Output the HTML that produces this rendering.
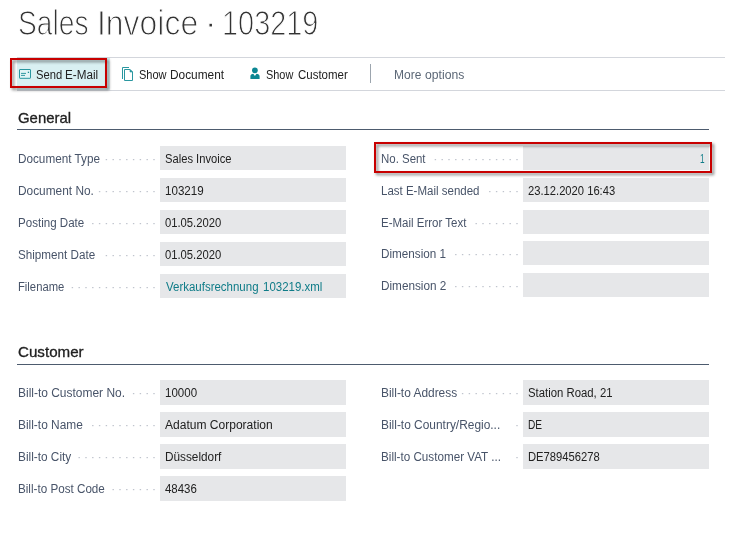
<!DOCTYPE html>
<html><head><meta charset="utf-8">
<style>
html,body{margin:0;padding:0;background:#fff;}
body{width:732px;height:535px;position:relative;overflow:hidden;font-family:"Liberation Sans",sans-serif;color:#212121;}
.abs{position:absolute;}
#title{left:0px;top:1px;font-size:34.5px;line-height:44px;color:#333;white-space:nowrap;-webkit-text-stroke:1.1px #fff;}
.tw{position:absolute;top:0;transform-origin:0 0;}
.t{position:absolute;white-space:nowrap;line-height:1;transform-origin:0 0;}
.line{left:17px;width:708px;height:1px;background:#d3d6dc;}
#btn{left:17px;top:58px;width:93px;height:32px;background:#d9f0f2;}
.red{border:2px solid #c80000;filter:drop-shadow(2.5px 2.5px 1.8px rgba(0,0,0,.5));}
.sep{left:370px;top:64px;width:1px;height:19px;background:#9ca5ae;}
.hr{left:17px;width:692px;height:1px;background:#4d5b6e;}
.f{width:186px;background:#e6e7e9;}
.dots{height:1px;background-image:linear-gradient(90deg,#c3c7d0 0,#c3c7d0 1.5px,transparent 1.5px);background-size:6.9px 1px;background-position:right center;background-repeat:repeat-x;}
</style></head><body>
<div id="title" class="abs"><span class="tw" style="left:18.37px;transform:scaleX(0.8169)" id="t1">Sales</span><span class="tw" style="left:96.8px;transform:scaleX(0.9252)" id="t2">Invoice</span><span class="tw" style="left:204.03px;transform:scaleX(1.1667)" id="t3">·</span><span class="tw" style="left:221.79px;transform:scaleX(0.8373)" id="t4">103219</span></div>
<div class="abs line" style="top:57px"></div>
<div class="abs line" style="top:90px"></div>
<div id="btn" class="abs"></div>
<svg class="abs" style="left:19px;top:69px" width="12" height="10" viewBox="0 0 12 10"><rect x="0.5" y="0.5" width="11" height="8.800" rx="0.4" fill="#e2f4f6" stroke="#2a97a0"/><path d="M2 4.400h5M2 6.400h4" fill="none" stroke="#1f8f99" stroke-width="0.9"/><rect x="8.800" y="2.700" width="1.300" height="1.300" fill="#1f8f99"/></svg>
<svg class="abs" style="left:121px;top:66px" width="13" height="16" viewBox="0 0 13 16"><path d="M1.500 13V1.500H8" fill="none" stroke="#2a97a0"/><path d="M3.500 3.500H9L11.500 6V14.500H3.500Z" fill="#fff" stroke="#2a97a0"/><path d="M9 3.500V6H11.500Z" fill="#2a97a0" stroke="#2a97a0" stroke-width="0.6"/></svg>
<svg class="abs" style="left:250px;top:67px" width="10" height="13" viewBox="0 0 10 13"><circle cx="4.900" cy="3.300" r="2.850" fill="#0b8793"/><path d="M0.400 12V9.300C0.400 7.600 1.600 6.700 3.300 6.700L4.900 8.900L6.500 6.700C8.300 6.700 9.600 7.600 9.600 9.300V12Z" fill="#0b8793"/></svg>
<div class="abs sep"></div>
<div class="abs hr" style="top:129px"></div>
<div class="abs hr" style="top:364px"></div>
<div class="abs f" style="left:160px;top:146px;height:24px"></div>
<div class="abs f" style="left:160px;top:178px;height:24px"></div>
<div class="abs f" style="left:160px;top:210px;height:24px"></div>
<div class="abs f" style="left:160px;top:242px;height:24px"></div>
<div class="abs f" style="left:160px;top:274px;height:24px"></div>
<div class="abs f" style="left:160px;top:380px;height:25px"></div>
<div class="abs f" style="left:160px;top:412px;height:25px"></div>
<div class="abs f" style="left:160px;top:444px;height:25px"></div>
<div class="abs f" style="left:160px;top:476px;height:25px"></div>
<div class="abs f" style="left:523px;top:146px;height:24px"></div>
<div class="abs f" style="left:523px;top:178px;height:24px"></div>
<div class="abs f" style="left:523px;top:210px;height:24px"></div>
<div class="abs f" style="left:523px;top:241px;height:24px"></div>
<div class="abs f" style="left:523px;top:273px;height:24px"></div>
<div class="abs f" style="left:523px;top:380px;height:25px"></div>
<div class="abs f" style="left:523px;top:412px;height:25px"></div>
<div class="abs f" style="left:523px;top:444px;height:25px"></div>
<svg class="abs" style="left:0;top:0" width="732" height="535" fill="#bfc4cd"><rect x="153.30" y="159" width="1.4" height="1.2"/><rect x="146.50" y="159" width="1.4" height="1.2"/><rect x="139.70" y="159" width="1.4" height="1.2"/><rect x="132.90" y="159" width="1.4" height="1.2"/><rect x="126.10" y="159" width="1.4" height="1.2"/><rect x="119.30" y="159" width="1.4" height="1.2"/><rect x="112.50" y="159" width="1.4" height="1.2"/><rect x="105.70" y="159" width="1.4" height="1.2"/><rect x="153.30" y="191" width="1.4" height="1.2"/><rect x="146.50" y="191" width="1.4" height="1.2"/><rect x="139.70" y="191" width="1.4" height="1.2"/><rect x="132.90" y="191" width="1.4" height="1.2"/><rect x="126.10" y="191" width="1.4" height="1.2"/><rect x="119.30" y="191" width="1.4" height="1.2"/><rect x="112.50" y="191" width="1.4" height="1.2"/><rect x="105.70" y="191" width="1.4" height="1.2"/><rect x="98.90" y="191" width="1.4" height="1.2"/><rect x="153.30" y="223" width="1.4" height="1.2"/><rect x="146.50" y="223" width="1.4" height="1.2"/><rect x="139.70" y="223" width="1.4" height="1.2"/><rect x="132.90" y="223" width="1.4" height="1.2"/><rect x="126.10" y="223" width="1.4" height="1.2"/><rect x="119.30" y="223" width="1.4" height="1.2"/><rect x="112.50" y="223" width="1.4" height="1.2"/><rect x="105.70" y="223" width="1.4" height="1.2"/><rect x="98.90" y="223" width="1.4" height="1.2"/><rect x="92.10" y="223" width="1.4" height="1.2"/><rect x="153.30" y="255" width="1.4" height="1.2"/><rect x="146.50" y="255" width="1.4" height="1.2"/><rect x="139.70" y="255" width="1.4" height="1.2"/><rect x="132.90" y="255" width="1.4" height="1.2"/><rect x="126.10" y="255" width="1.4" height="1.2"/><rect x="119.30" y="255" width="1.4" height="1.2"/><rect x="112.50" y="255" width="1.4" height="1.2"/><rect x="105.70" y="255" width="1.4" height="1.2"/><rect x="153.30" y="287" width="1.4" height="1.2"/><rect x="146.50" y="287" width="1.4" height="1.2"/><rect x="139.70" y="287" width="1.4" height="1.2"/><rect x="132.90" y="287" width="1.4" height="1.2"/><rect x="126.10" y="287" width="1.4" height="1.2"/><rect x="119.30" y="287" width="1.4" height="1.2"/><rect x="112.50" y="287" width="1.4" height="1.2"/><rect x="105.70" y="287" width="1.4" height="1.2"/><rect x="98.90" y="287" width="1.4" height="1.2"/><rect x="92.10" y="287" width="1.4" height="1.2"/><rect x="85.30" y="287" width="1.4" height="1.2"/><rect x="78.50" y="287" width="1.4" height="1.2"/><rect x="71.70" y="287" width="1.4" height="1.2"/><rect x="153.30" y="393" width="1.4" height="1.2"/><rect x="146.50" y="393" width="1.4" height="1.2"/><rect x="139.70" y="393" width="1.4" height="1.2"/><rect x="132.90" y="393" width="1.4" height="1.2"/><rect x="153.30" y="425" width="1.4" height="1.2"/><rect x="146.50" y="425" width="1.4" height="1.2"/><rect x="139.70" y="425" width="1.4" height="1.2"/><rect x="132.90" y="425" width="1.4" height="1.2"/><rect x="126.10" y="425" width="1.4" height="1.2"/><rect x="119.30" y="425" width="1.4" height="1.2"/><rect x="112.50" y="425" width="1.4" height="1.2"/><rect x="105.70" y="425" width="1.4" height="1.2"/><rect x="98.90" y="425" width="1.4" height="1.2"/><rect x="92.10" y="425" width="1.4" height="1.2"/><rect x="153.30" y="457" width="1.4" height="1.2"/><rect x="146.50" y="457" width="1.4" height="1.2"/><rect x="139.70" y="457" width="1.4" height="1.2"/><rect x="132.90" y="457" width="1.4" height="1.2"/><rect x="126.10" y="457" width="1.4" height="1.2"/><rect x="119.30" y="457" width="1.4" height="1.2"/><rect x="112.50" y="457" width="1.4" height="1.2"/><rect x="105.70" y="457" width="1.4" height="1.2"/><rect x="98.90" y="457" width="1.4" height="1.2"/><rect x="92.10" y="457" width="1.4" height="1.2"/><rect x="85.30" y="457" width="1.4" height="1.2"/><rect x="78.50" y="457" width="1.4" height="1.2"/><rect x="153.30" y="489" width="1.4" height="1.2"/><rect x="146.50" y="489" width="1.4" height="1.2"/><rect x="139.70" y="489" width="1.4" height="1.2"/><rect x="132.90" y="489" width="1.4" height="1.2"/><rect x="126.10" y="489" width="1.4" height="1.2"/><rect x="119.30" y="489" width="1.4" height="1.2"/><rect x="112.50" y="489" width="1.4" height="1.2"/><rect x="516.30" y="159" width="1.4" height="1.2"/><rect x="509.50" y="159" width="1.4" height="1.2"/><rect x="502.70" y="159" width="1.4" height="1.2"/><rect x="495.90" y="159" width="1.4" height="1.2"/><rect x="489.10" y="159" width="1.4" height="1.2"/><rect x="482.30" y="159" width="1.4" height="1.2"/><rect x="475.50" y="159" width="1.4" height="1.2"/><rect x="468.70" y="159" width="1.4" height="1.2"/><rect x="461.90" y="159" width="1.4" height="1.2"/><rect x="455.10" y="159" width="1.4" height="1.2"/><rect x="448.30" y="159" width="1.4" height="1.2"/><rect x="441.50" y="159" width="1.4" height="1.2"/><rect x="434.70" y="159" width="1.4" height="1.2"/><rect x="516.30" y="191" width="1.4" height="1.2"/><rect x="509.50" y="191" width="1.4" height="1.2"/><rect x="502.70" y="191" width="1.4" height="1.2"/><rect x="495.90" y="191" width="1.4" height="1.2"/><rect x="489.10" y="191" width="1.4" height="1.2"/><rect x="516.30" y="223" width="1.4" height="1.2"/><rect x="509.50" y="223" width="1.4" height="1.2"/><rect x="502.70" y="223" width="1.4" height="1.2"/><rect x="495.90" y="223" width="1.4" height="1.2"/><rect x="489.10" y="223" width="1.4" height="1.2"/><rect x="482.30" y="223" width="1.4" height="1.2"/><rect x="475.50" y="223" width="1.4" height="1.2"/><rect x="516.30" y="254" width="1.4" height="1.2"/><rect x="509.50" y="254" width="1.4" height="1.2"/><rect x="502.70" y="254" width="1.4" height="1.2"/><rect x="495.90" y="254" width="1.4" height="1.2"/><rect x="489.10" y="254" width="1.4" height="1.2"/><rect x="482.30" y="254" width="1.4" height="1.2"/><rect x="475.50" y="254" width="1.4" height="1.2"/><rect x="468.70" y="254" width="1.4" height="1.2"/><rect x="461.90" y="254" width="1.4" height="1.2"/><rect x="455.10" y="254" width="1.4" height="1.2"/><rect x="516.30" y="286" width="1.4" height="1.2"/><rect x="509.50" y="286" width="1.4" height="1.2"/><rect x="502.70" y="286" width="1.4" height="1.2"/><rect x="495.90" y="286" width="1.4" height="1.2"/><rect x="489.10" y="286" width="1.4" height="1.2"/><rect x="482.30" y="286" width="1.4" height="1.2"/><rect x="475.50" y="286" width="1.4" height="1.2"/><rect x="468.70" y="286" width="1.4" height="1.2"/><rect x="461.90" y="286" width="1.4" height="1.2"/><rect x="455.10" y="286" width="1.4" height="1.2"/><rect x="516.30" y="393" width="1.4" height="1.2"/><rect x="509.50" y="393" width="1.4" height="1.2"/><rect x="502.70" y="393" width="1.4" height="1.2"/><rect x="495.90" y="393" width="1.4" height="1.2"/><rect x="489.10" y="393" width="1.4" height="1.2"/><rect x="482.30" y="393" width="1.4" height="1.2"/><rect x="475.50" y="393" width="1.4" height="1.2"/><rect x="468.70" y="393" width="1.4" height="1.2"/><rect x="461.90" y="393" width="1.4" height="1.2"/><rect x="516.30" y="425" width="1.4" height="1.2"/><rect x="516.30" y="457" width="1.4" height="1.2"/></svg>
<span class="t" id="x0" style="left:35.59px;top:68.8px;font-size:12px;color:#212121;transform:scaleX(0.9352)">Send</span>
<span class="t" id="x1" style="left:65.24px;top:68.8px;font-size:12px;color:#212121;transform:scaleX(0.9738)">E-Mail</span>
<span class="t" id="x2" style="left:138.6px;top:68.8px;font-size:12px;color:#212121;transform:scaleX(0.9191)">Show</span>
<span class="t" id="x3" style="left:170.42px;top:68.8px;font-size:12px;color:#212121;transform:scaleX(0.9889)">Document</span>
<span class="t" id="x4" style="left:265.81px;top:68.8px;font-size:12px;color:#212121;transform:scaleX(0.9088)">Show</span>
<span class="t" id="x5" style="left:297.7px;top:68.8px;font-size:12px;color:#212121;transform:scaleX(0.9563)">Customer</span>
<span class="t" id="x6" style="left:393.93px;top:68.8px;font-size:12px;color:#5b6776;transform:scaleX(0.9988)">More</span>
<span class="t" id="x7" style="left:425.33px;top:68.8px;font-size:12px;color:#5b6776;transform:scaleX(1.0146)">options</span>
<span class="t" id="x8" style="left:17.87px;top:110.8px;font-size:14.6px;color:#212121;-webkit-text-stroke:0.3px #212121;transform:scaleX(1.0213)">General</span>
<span class="t" id="x9" style="left:17.85px;top:344.8px;font-size:14.6px;color:#212121;-webkit-text-stroke:0.3px #212121;transform:scaleX(1.038)">Customer</span>
<span class="t" id="x10" style="left:17.93px;top:152.8px;font-size:12px;color:#485469;transform:scaleX(0.9775)">Document Type</span>
<span class="t" id="x11" style="left:164.99px;top:152.8px;font-size:12px;color:#212121;transform:scaleX(0.9319)">Sales Invoice</span>
<span class="t" id="x12" style="left:17.92px;top:184.8px;font-size:12px;color:#485469;transform:scaleX(0.9891)">Document No.</span>
<span class="t" id="x13" style="left:164.88px;top:184.8px;font-size:12px;color:#212121;transform:scaleX(0.9663)">103219</span>
<span class="t" id="x14" style="left:17.95px;top:216.8px;font-size:12px;color:#485469;transform:scaleX(0.9642)">Posting Date</span>
<span class="t" id="x15" style="left:165.3px;top:216.8px;font-size:12px;color:#212121;transform:scaleX(0.9364)">01.05.2020</span>
<span class="t" id="x16" style="left:18.06px;top:248.8px;font-size:12px;color:#485469;transform:scaleX(0.9727)">Shipment Date</span>
<span class="t" id="x17" style="left:165.3px;top:248.8px;font-size:12px;color:#212121;transform:scaleX(0.9364)">01.05.2020</span>
<span class="t" id="x18" style="left:17.97px;top:280.8px;font-size:12px;color:#485469;transform:scaleX(0.9375)">Filename</span>
<span class="t" id="x19" style="left:165.56px;top:280.8px;font-size:12px;color:#0f7c88;transform:scaleX(0.9564)">Verkaufsrechnung</span>
<span class="t" id="x20" style="left:262.59px;top:280.8px;font-size:12px;color:#0f7c88;transform:scaleX(0.9556)">103219.xml</span>
<span class="t" id="x21" style="left:17.92px;top:386.8px;font-size:12px;color:#485469;transform:scaleX(0.9966)">Bill-to Customer No.</span>
<span class="t" id="x22" style="left:164.88px;top:386.8px;font-size:12px;color:#212121;transform:scaleX(0.9604)">10000</span>
<span class="t" id="x23" style="left:17.92px;top:418.8px;font-size:12px;color:#485469;transform:scaleX(0.992)">Bill-to Name</span>
<span class="t" id="x24" style="left:165.38px;top:418.8px;font-size:12px;color:#212121;transform:scaleX(1.003)">Adatum Corporation</span>
<span class="t" id="x25" style="left:17.93px;top:450.8px;font-size:12px;color:#485469;transform:scaleX(0.985)">Bill-to City</span>
<span class="t" id="x26" style="left:164.83px;top:450.8px;font-size:12px;color:#212121;transform:scaleX(0.9821)">Düsseldorf</span>
<span class="t" id="x27" style="left:17.94px;top:482.8px;font-size:12px;color:#485469;transform:scaleX(0.9715)">Bill-to Post Code</span>
<span class="t" id="x28" style="left:165.37px;top:482.8px;font-size:12px;color:#212121;transform:scaleX(0.9545)">48436</span>
<span class="t" id="x29" style="left:380.67px;top:152.8px;font-size:12px;color:#485469;transform:scaleX(0.9538)">No. Sent</span>
<span class="t" id="x30" style="left:699.72px;top:152.8px;font-size:12px;color:#0f7c88;transform:scaleX(0.6857)">1</span>
<span class="t" id="x31" style="left:380.65px;top:184.8px;font-size:12px;color:#485469;transform:scaleX(0.959)">Last E-Mail sended</span>
<span class="t" id="x32" style="left:528.09px;top:184.8px;font-size:12px;color:#212121;transform:scaleX(0.9332)">23.12.2020 16:43</span>
<span class="t" id="x33" style="left:380.65px;top:216.8px;font-size:12px;color:#485469;transform:scaleX(0.9574)">E-Mail Error Text</span>
<span class="t" id="x34" style="left:380.64px;top:247.8px;font-size:12px;color:#485469;transform:scaleX(0.9754)">Dimension 1</span>
<span class="t" id="x35" style="left:380.63px;top:279.8px;font-size:12px;color:#485469;transform:scaleX(0.9797)">Dimension 2</span>
<span class="t" id="x36" style="left:380.62px;top:386.8px;font-size:12px;color:#485469;transform:scaleX(0.993)">Bill-to Address</span>
<span class="t" id="x37" style="left:527.98px;top:386.8px;font-size:12px;color:#212121;transform:scaleX(0.9458)">Station Road, 21</span>
<span class="t" id="x38" style="left:380.62px;top:418.8px;font-size:12px;color:#485469;transform:scaleX(0.9932)">Bill-to Country/Regio...</span>
<span class="t" id="x39" style="left:527.95px;top:418.8px;font-size:12px;color:#212121;transform:scaleX(0.8448)">DE</span>
<span class="t" id="x40" style="left:380.64px;top:450.8px;font-size:12px;color:#485469;transform:scaleX(0.9728)">Bill-to Customer VAT ...</span>
<span class="t" id="x41" style="left:527.87px;top:450.8px;font-size:12px;color:#212121;transform:scaleX(0.9359)">DE789456278</span>
<div class="abs red" style="left:10px;top:58px;width:93px;height:26px"></div>
<div class="abs red" style="left:374px;top:142px;width:334px;height:27px"></div>

</body></html>
